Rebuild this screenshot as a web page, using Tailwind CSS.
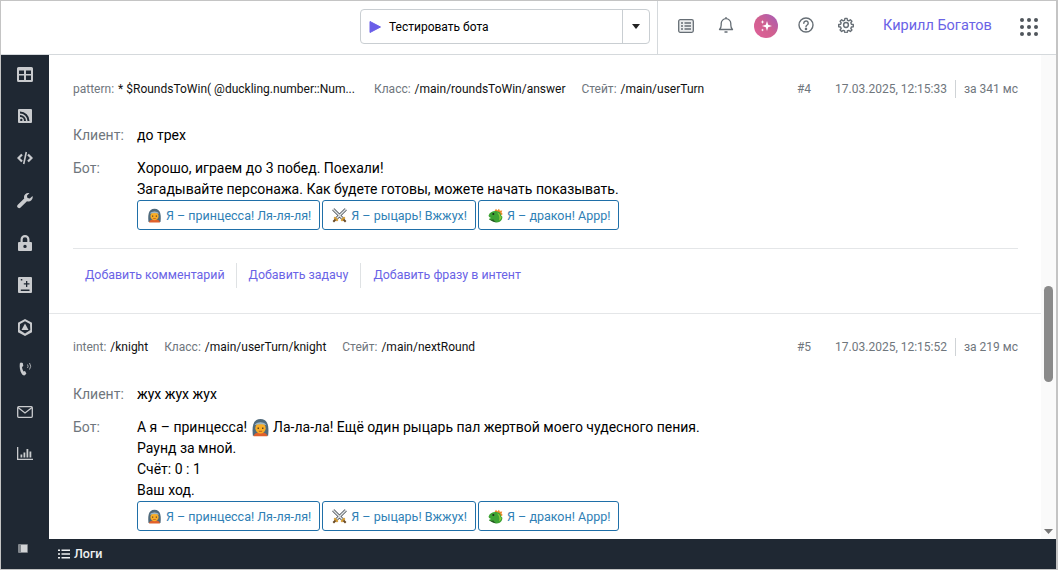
<!DOCTYPE html>
<html lang="ru">
<head>
    <meta charset="UTF-8">
    <title>Логи</title>
    <script src="https://cdn.jsdelivr.net/npm/@tailwindcss/browser@4"></script>
</head>
<body class="h-[570px] w-[1058px] overflow-hidden bg-white font-['Roboto',sans-serif] text-black">
<svg width="0" height="0" class="absolute">
    <defs>
        <g id="princess">
            <path d="M1.500 14C.8 8 1 .8 7.500.8S14.200 8 13.500 14z" fill="#4f6a7c"/>
            <path d="M2 14.500c.5-2.500 2.500-3 5.500-3s5 .5 5.500 3z" fill="#e0602c"/>
            <ellipse cx="7.500" cy="8" rx="4.100" ry="4.300" fill="#f8ad26"/>
            <path d="M2.800 5.800C4 2.600 11 2.600 12.200 5.800 9.500 4.600 5.500 4.600 2.800 5.800z" fill="#9cb6c6"/>
            <path d="M5.200 7.500h1v1.200h-1zM8.800 7.500h1v1.200h-1z" fill="#4a3320"/>
            <path d="M6.200 10.500h2.600" stroke="#b5521f" stroke-width=".7"/>
        </g>
        <g id="swords" fill="none">
            <path d="M1.200 1.200l9.300 9.300M13.800 1.200l-9.300 9.300" stroke="#3f454b" stroke-width="3"/>
            <path d="M1.200 1.200l9.300 9.300M13.800 1.200l-9.300 9.300" stroke="#e3e7ea" stroke-width="1.500"/>
            <path d="M2.300 9.300l3.400 3.400M12.700 9.300l-3.400 3.400" stroke="#d39a2f" stroke-width="2"/>
            <path d="M3.500 11.500L1.300 13.700M11.500 11.500l2.200 2.200" stroke="#6a4a26" stroke-width="2"/>
        </g>
        <g id="dragon">
            <path d="M6.500 3L8 .8l1.300 1.700L11 .8l.8 2 2.400-.4-.7 2.400 1.300 1.300-2.800 2z" fill="#e8882a"/>
            <path d="M.6 7.500C1.400 4.400 4.500 2.800 8 3c3.200.2 5 2 5 4.300l1.400 1.500c0 3.200-2.200 5.700-5.500 5.700-1.700 0-2.800-.8-3.400-2.200-1.800.4-3.800 0-4.600-1.300.5-.5 1.200-.8 2.100-1-1.300-.5-2.600-1.300-2.400-2.500z" fill="#3da334"/>
            <path d="M1 10.800c1.300.9 3 1 4.500.7.600 1.400 1.900 2.500 3.400 2.700-2.700.6-5.600-1-7.900-3.400z" fill="#235a20"/>
            <path d="M9 4.500c2 .3 3.300 1.600 3.300 3.500l1.200 1c-.3 1.500-1.200 2.600-2.500 3.200 1-2.800 0-5.800-2-7.700z" fill="#8ccb3c"/>
            <circle cx="5.300" cy="5.900" r="1" fill="#1d2a18"/>
        </g>
    </defs>
</svg>
<div class="flex h-[570px] flex-col border border-[#c4c4c4] border-r-2">
    <!-- top bar -->
    <header class="flex h-[54px] shrink-0 items-stretch border-b border-[#d5d9dc] bg-white">
        <div class="flex flex-1 items-center justify-end pr-[7px] pb-[2px]">
            <div class="flex h-[35px] w-[290px] items-stretch rounded-[4px] border border-[#c9ced2]">
                <div class="flex flex-1 items-center pl-[8px] text-[12px]">
                    <svg width="12" height="14" viewBox="0 0 12 14" class="mr-[8px]"><path d="M1 1.500v11L11.500 7z" fill="#6a5ee8" stroke="#6a5ee8" stroke-linejoin="round"/></svg>
                    Тестировать бота
                </div>
                <div class="flex w-[27px] items-center justify-center border-l border-[#c9ced2]">
                    <svg width="8" height="5" viewBox="0 0 8 5"><path d="M0 0h8L4 5z" fill="#222"/></svg>
                </div>
            </div>
        </div>
        <div class="flex w-[399px] items-center border-l border-[#d5d9dc] pb-[3px]">
            <svg width="16" height="14" viewBox="0 0 16 14" class="ml-[20px]" fill="none" stroke="#666e75" stroke-width="1.300"><rect x=".7" y=".7" width="14.600" height="12.600" rx="1.500" fill="#eceeef"/><path d="M3 4h2M3 7h2M3 10h2M6.500 4H13M6.500 7H13M6.500 10H13"/></svg>
            <svg width="16" height="18" viewBox="0 0 16 18" class="ml-[24px] -mt-[2px]" fill="none" stroke="#666e75" stroke-width="1.300"><path d="M1.500 13.500c1.300-1.200 1.700-2.200 1.700-4.500V7.500a4.800 4.800 0 0 1 9.600 0V9c0 2.300.4 3.300 1.700 4.500z" stroke-linejoin="round"/><path d="M6.500 16h3M8 1v1.500"/></svg>
            <div class="ml-[20px] flex h-[24px] w-[24px] items-center justify-center rounded-full bg-gradient-to-tr from-[#e0609a] via-[#d0608f] to-[#a45bb8]">
                <svg width="14" height="14" viewBox="0 0 14 14" fill="#fff"><path d="M8 2l1.200 3.800L13 7l-3.800 1.200L8 12 6.800 8.200 3 7l3.800-1.200zM3.500 1l.5 1.500L5.500 3 4 3.500 3.500 5 3 3.500 1.500 3 3 2.500zM3.500 9.500l.4 1.100 1.100.4-1.100.4-.4 1.100-.4-1.100L2 11l1.100-.4z"/></svg>
            </div>
            <svg width="16" height="16" viewBox="0 0 16 16" class="ml-[20px] -mt-[2px]" fill="none" stroke="#666e75" stroke-width="1.400"><circle cx="8" cy="8" r="7"/><path d="M5.800 6.200a2.200 2.200 0 1 1 3.400 1.800c-.8.500-1.200.9-1.200 1.800" stroke-linecap="round"/><circle cx="8" cy="12" r=".6" fill="#666e75"/></svg>
            <svg width="16" height="16" viewBox="0 0 24 24" class="ml-[24px] -mt-[2px]" fill="none" stroke="#666e75" stroke-width="2.200"><circle cx="12" cy="12" r="3.600"/><path d="M10.300 1.500h3.400l.5 3 2.200.9 2.500-1.700 2.400 2.400-1.700 2.500.9 2.200 3 .5v3.400l-3 .5-.9 2.200 1.700 2.500-2.400 2.400-2.500-1.700-2.200.9-.5 3h-3.400l-.5-3-2.200-.9-2.500 1.700-2.400-2.400 1.700-2.500-.9-2.200-3-.5v-3.400l3-.5.9-2.200-1.700-2.500 2.400-2.400 2.500 1.700 2.200-.9z" stroke-linejoin="round" transform="translate(.6 .6) scale(.95)"/></svg>
            <span class="ml-[29px] text-[14.500px] text-[#6a63e6]">Кирилл Богатов</span>
            <div class="ml-[28px] mt-[2px] grid grid-cols-3 gap-[3px]">
                <i class="h-[4px] w-[4px] rounded-full bg-[#50565c]"></i><i class="h-[4px] w-[4px] rounded-full bg-[#50565c]"></i><i class="h-[4px] w-[4px] rounded-full bg-[#50565c]"></i>
                <i class="h-[4px] w-[4px] rounded-full bg-[#50565c]"></i><i class="h-[4px] w-[4px] rounded-full bg-[#50565c]"></i><i class="h-[4px] w-[4px] rounded-full bg-[#50565c]"></i>
                <i class="h-[4px] w-[4px] rounded-full bg-[#50565c]"></i><i class="h-[4px] w-[4px] rounded-full bg-[#50565c]"></i><i class="h-[4px] w-[4px] rounded-full bg-[#50565c]"></i>
            </div>
        </div>
    </header>

    <div class="flex min-h-0 flex-1">
        <!-- sidebar -->
        <aside class="flex w-[48px] shrink-0 flex-col items-center bg-[#1f2833] pb-[16px]">
            <div class="-mt-[2px] flex w-full flex-col text-[#c9cbce] [&>div]:flex [&>div]:h-[42.200px] [&>div]:items-center [&>div]:justify-center">
                <div><svg width="16" height="15" viewBox="0 0 16 15" fill="currentColor"><path fill-rule="evenodd" d="M1.500 0h13a1.500 1.500 0 0 1 1.500 1.500v12a1.500 1.500 0 0 1-1.500 1.500h-13A1.500 1.500 0 0 1 0 13.500v-12A1.500 1.500 0 0 1 1.500 0zM2 3.500V7h5V3.500zm7 0V7h5V3.500zM2 8.500V13h5V8.500zm7 0V13h5V8.500z"/></svg></div>
                <div><svg width="14" height="14" viewBox="0 0 14 14" fill="currentColor"><path fill-rule="evenodd" d="M1 0h12a1 1 0 0 1 1 1v12a1 1 0 0 1-1 1H1a1 1 0 0 1-1-1V1a1 1 0 0 1 1-1zm1 2.500v2a7.500 7.500 0 0 1 7.500 7.500h2A9.500 9.500 0 0 0 2 2.500zM2 6v2a4 4 0 0 1 4 4h2a6 6 0 0 0-6-6zm1.300 3.700a1.200 1.200 0 1 0 0 2.400 1.200 1.200 0 0 0 0-2.400z"/></svg></div>
                <div><svg width="16" height="14" viewBox="0 0 16 14" fill="none" stroke="currentColor" stroke-width="2.200"><path d="M5 3.500L1.500 7 5 10.500M11 3.500L14.500 7 11 10.500"/><path d="M9.300 1L6.700 13" stroke-width="1.600"/></svg></div>
                <div><svg width="16" height="17" viewBox="0 0 16 16" fill="currentColor"><path d="M15.500 3.500l-2.700 2.600-2.300-.6-.6-2.300L12.500.6A4.300 4.300 0 0 0 7.200 6L.8 12.300a1.900 1.900 0 0 0 2.800 2.800L10 8.800a4.300 4.300 0 0 0 5.500-5.300z"/></svg></div>
                <div><svg width="14" height="16" viewBox="0 0 14 16" fill="currentColor"><path fill-rule="evenodd" d="M7 0a4.500 4.500 0 0 1 4.500 4.500V7h1.500a1 1 0 0 1 1 1v7a1 1 0 0 1-1 1H1a1 1 0 0 1-1-1V8a1 1 0 0 1 1-1h1.500V4.500A4.500 4.500 0 0 1 7 0zm0 2.200a2.300 2.300 0 0 0-2.300 2.300V7h4.600V4.500A2.300 2.300 0 0 0 7 2.200zM7 9.700a1.700 1.700 0 1 0 0 3.400 1.700 1.700 0 0 0 0-3.400z"/></svg></div>
                <div><svg width="14" height="16" viewBox="0 0 14 16" fill="currentColor"><path fill-rule="evenodd" d="M1 0h12a1 1 0 0 1 1 1v14a1 1 0 0 1-1 1H1a1 1 0 0 1-1-1V1a1 1 0 0 1 1-1zm7 4v2.300H5.800v1.300H8v2.300h1.300V7.600h2.200V6.300H9.300V4zM2.800 2v1.500h1.500V2zm0 10.500V14h8.700v-1.500z"/></svg></div>
                <div><svg width="16" height="17" viewBox="0 0 16 17" fill="currentColor"><path fill-rule="evenodd" d="M8 0l7 3.800v9.400L8 17l-7-3.800V3.800zM8 2.200L3 5l-.3 6L8 14.500l5.300-3.500L13 5z"/><path d="M8 4.500l3.500 6.500h-7z"/></svg></div>
                <div><svg width="16" height="16" viewBox="0 0 16 16" fill="currentColor"><path d="M3.800 1.500l2 .6.500 3-1.300 1c.2 1.700.6 3 1.500 4.300l1.500-.4 1.400 2.500-1.500 1.800c-1.300.4-2.300-.2-3.200-1.500C2.900 9.800 2.400 6 2.800 2.500z"/><path d="M10.500 3.500a3 3 0 0 1 0 3.500M12.500 2a5.500 5.500 0 0 1 0 6.500" fill="none" stroke="currentColor" stroke-width=".8"/></svg></div>
                <div><svg width="16" height="12" viewBox="0 0 16 12" fill="none" stroke="currentColor" stroke-width="1.300"><rect x=".7" y=".7" width="14.600" height="10.600" rx="1"/><path d="M1 1.500l7 5.500 7-5.500"/></svg></div>
                <div><svg width="16" height="13" viewBox="0 0 16 13" fill="currentColor"><path d="M0 0h1.300v11.700H16V13H0zM3.500 7.500h1.800v3H3.500zM6.500 5.500h1.800v5H6.500zM9.500 2h1.800v8.500H9.500zM12.500 4.500h1.800v6h-1.800z"/></svg></div>
            </div>
            <svg width="10" height="9" viewBox="0 0 10 9" class="mt-auto -ml-[4px]" fill="#d2d4d6"><path fill-rule="evenodd" d="M1 0h8a1 1 0 0 1 1 1v7a1 1 0 0 1-1 1H1a1 1 0 0 1-1-1V1a1 1 0 0 1 1-1zm2 1v7h6V1z" opacity=".55"/><path d="M3 1h6v7H3z"/></svg>
        </aside>

        <div class="flex min-w-0 flex-1 flex-col">
            <div class="flex min-h-0 flex-1">
                <!-- log -->
                <main class="min-w-0 flex-1 overflow-hidden">
                    <section class="h-[259px] border-b border-[#e4e6e8] pt-[25px] pr-[23px] pl-[24px]">
                        <div class="flex h-[18px] items-center text-[12px] text-[#6f767d]">
                            <span class="mr-[4px]">pattern:</span><span class="text-[#111]">* $RoundsToWin( @duckling.number::Num...</span>
                            <span class="ml-[19px] mr-[4px]">Класс:</span><span class="text-[#111]">/main/roundsToWin/answer</span>
                            <span class="ml-[16px] mr-[4px]">Стейт:</span><span class="text-[#111]">/main/userTurn</span>
                            <span class="ml-auto">#4</span>
                            <span class="ml-[24px]">17.03.2025, 12:15:33</span>
                            <span class="ml-[8px] border-l border-[#cfd3d6] pl-[8px]">за 341 мс</span>
                        </div>
                        <div class="mt-[27px] flex text-[14px] leading-[21px]">
                            <span class="w-[64px] text-[#6f767d]">Клиент:</span><span>до трех</span>
                        </div>
                        <div class="mt-[12px] flex text-[14px] leading-[21px]">
                            <span class="w-[64px] text-[#6f767d]">Бот:</span>
                            <div>
                                <p>Хорошо, играем до 3 побед. Поехали!</p>
                                <p>Загадывайте персонажа. Как будете готовы, можете начать показывать.</p>
                                <div class="flex gap-[2px]">
                                    <button class="flex h-[30px] items-center gap-[4px] rounded-[3px] border border-[#1f6fa8] pr-[8px] pl-[9px] text-[12.500px] text-[#2f7fb5]"><svg width="15" height="15" viewBox="0 0 15 15"><use href="#princess"/></svg>Я – принцесса! Ля-ля-ля!</button>
                                    <button class="flex h-[30px] items-center gap-[4px] rounded-[3px] border border-[#1f6fa8] pr-[8px] pl-[9px] text-[12.500px] text-[#2f7fb5]"><svg width="15" height="15" viewBox="0 0 15 15"><use href="#swords"/></svg>Я – рыцарь! Вжжух!</button>
                                    <button class="flex h-[30px] items-center gap-[4px] rounded-[3px] border border-[#1f6fa8] pr-[8px] pl-[9px] text-[12.500px] text-[#2f7fb5]"><svg width="15" height="15" viewBox="0 0 15 15"><use href="#dragon"/></svg>Я – дракон! Аррр!</button>
                                </div>
                            </div>
                        </div>
                        <div class="mt-[18px] flex h-[52px] items-center border-t border-[#e4e6e8] pt-[2px] text-[12.400px] text-[#6a63e6]">
                            <span class="border-r border-[#dfe2e4] py-[3px] pr-[11px] pl-[12px]">Добавить комментарий</span>
                            <span class="border-r border-[#dfe2e4] py-[3px] pr-[12px] pl-[12px]">Добавить задачу</span>
                            <span class="py-[3px] pl-[12px]">Добавить фразу в интент</span>
                        </div>
                    </section>
                    <section class="pt-[24px] pr-[23px] pl-[24px]">
                        <div class="flex h-[18px] items-center text-[12px] text-[#6f767d]">
                            <span class="mr-[4px]">intent:</span><span class="text-[#111]">/knight</span>
                            <span class="ml-[16px] mr-[4px]">Класс:</span><span class="text-[#111]">/main/userTurn/knight</span>
                            <span class="ml-[16px] mr-[4px]">Стейт:</span><span class="text-[#111]">/main/nextRound</span>
                            <span class="ml-auto">#5</span>
                            <span class="ml-[24px]">17.03.2025, 12:15:52</span>
                            <span class="ml-[8px] border-l border-[#cfd3d6] pl-[8px]">за 219 мс</span>
                        </div>
                        <div class="mt-[28px] flex text-[14px] leading-[21px]">
                            <span class="w-[64px] text-[#6f767d]">Клиент:</span><span>жух жух жух</span>
                        </div>
                        <div class="mt-[12px] flex text-[14px] leading-[21px]">
                            <span class="w-[64px] text-[#6f767d]">Бот:</span>
                            <div>
                                <p class="flex items-center">А я – принцесса!&nbsp;<svg width="19" height="19" viewBox="0 0 15 15"><use href="#princess"/></svg>&nbsp;Ла-ла-ла! Ещё один рыцарь пал жертвой моего чудесного пения.</p>
                                <p>Раунд за мной.</p>
                                <p>Счёт: 0 : 1</p>
                                <p>Ваш ход.</p>
                                <div class="flex gap-[2px]">
                                    <button class="flex h-[30px] items-center gap-[4px] rounded-[3px] border border-[#1f6fa8] pr-[8px] pl-[9px] text-[12.500px] text-[#2f7fb5]"><svg width="15" height="15" viewBox="0 0 15 15"><use href="#princess"/></svg>Я – принцесса! Ля-ля-ля!</button>
                                    <button class="flex h-[30px] items-center gap-[4px] rounded-[3px] border border-[#1f6fa8] pr-[8px] pl-[9px] text-[12.500px] text-[#2f7fb5]"><svg width="15" height="15" viewBox="0 0 15 15"><use href="#swords"/></svg>Я – рыцарь! Вжжух!</button>
                                    <button class="flex h-[30px] items-center gap-[4px] rounded-[3px] border border-[#1f6fa8] pr-[8px] pl-[9px] text-[12.500px] text-[#2f7fb5]"><svg width="15" height="15" viewBox="0 0 15 15"><use href="#dragon"/></svg>Я – дракон! Аррр!</button>
                                </div>
                            </div>
                        </div>
                    </section>
                </main>
                <!-- scrollbar -->
                <div class="flex w-[15px] shrink-0 flex-col items-center bg-[#fafafa] pt-[231px]">
                    <div class="h-[96px] w-[9px] rounded-[5px] bg-[#8a8a8a]"></div>
                    <svg width="9" height="5" viewBox="0 0 9 5" class="mt-auto mb-[5px]"><path d="M0 0h9L4.500 5z" fill="#777"/></svg>
                </div>
            </div>
            <footer class="flex h-[30px] shrink-0 items-center bg-[#1f2833] pl-[9px] text-[12.500px] font-medium text-[#eef0f1]">
                <svg width="12" height="10" viewBox="0 0 12 10" class="mr-[4px]" fill="#eef0f1"><path d="M0 .5h2v1.500H0zM3.500.5H12v1.500H3.500zM0 4.200h2v1.500H0zM3.500 4.200H12v1.500H3.500zM0 8h2v1.500H0zM3.500 8H12v1.500H3.500z"/></svg>
                Логи
            </footer>
        </div>
    </div>
</div>
</body>
</html>
